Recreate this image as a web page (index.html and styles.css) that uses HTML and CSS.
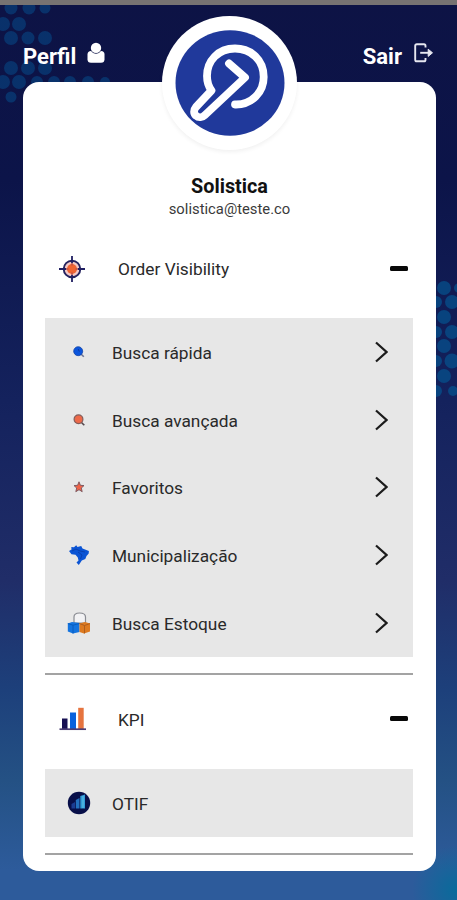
FILE: index.html
```
<!DOCTYPE html>
<html lang="pt-BR">
<head>
  <meta charset="UTF-8">
  <meta name="viewport" content="width=device-width, initial-scale=1.0">
  <title>Solistica</title>
  <link rel="stylesheet" href="styles.css">
</head>
<body>
  <svg class="dots" width="457" height="900" viewBox="0 0 457 900" aria-hidden="true">
    <g fill="#07427f" opacity=".65">
      <circle cx="11" cy="8" r="6.5"/><circle cx="29" cy="8" r="6.5"/><circle cx="45" cy="8" r="5.5"/>
      <circle cx="3" cy="24" r="7"/><circle cx="19" cy="24" r="7"/>
      <circle cx="11" cy="38" r="7"/><circle cx="28" cy="38" r="6.5"/><circle cx="45" cy="38" r="7"/>
      <circle cx="11" cy="68" r="7"/><circle cx="28" cy="68" r="7"/><circle cx="45" cy="68" r="7"/>
      <circle cx="3" cy="82" r="7"/><circle cx="19" cy="82" r="7"/><circle cx="37" cy="82" r="6"/><circle cx="54" cy="82" r="6"/>
      <circle cx="70" cy="82" r="6"/><circle cx="88" cy="82" r="6"/><circle cx="105" cy="82" r="5"/>
      <circle cx="11" cy="97" r="5.5"/>
    </g>
    <g fill="#06508c" opacity=".75">
      <circle cx="444" cy="288" r="7"/><circle cx="459" cy="288" r="5"/>
      <circle cx="436" cy="302" r="6"/><circle cx="452" cy="302" r="7"/>
      <circle cx="444" cy="317" r="7"/>
      <circle cx="436" cy="332" r="6"/><circle cx="452" cy="332" r="7"/>
      <circle cx="444" cy="346" r="7"/>
      <circle cx="436" cy="361" r="6"/><circle cx="452" cy="361" r="7.5"/>
      <circle cx="444" cy="376" r="7"/>
      <circle cx="436" cy="391" r="6"/><circle cx="453" cy="391" r="5"/>
    </g>
  </svg>

  <div class="statusbar"></div>

  <header class="topbar">
    <a class="top-link">
      <span>Perfil</span>
      <svg class="user-icon" width="18" height="21" viewBox="0 0 18 21">
        <rect x=".5" y="9" width="17" height="11.8" rx="3.5" fill="#fff"/>
        <circle cx="9" cy="6" r="5.8" fill="#0d1345"/>
        <circle cx="9" cy="5.9" r="5.2" fill="#fff"/>
      </svg>
    </a>
    <a class="top-link">
      <span>Sair</span>
      <svg class="exit-icon" width="20" height="20" viewBox="0 0 20 20" fill="none" stroke="#e6e7f0" stroke-width="1.9">
        <path d="M11.5 4.500V2.800Q11.500 1.200 10 1.200H2.800Q1.200 1.200 1.200 2.800V16.700Q1.200 18.300 2.800 18.300H10Q11.500 18.300 11.500 16.700V15"/>
        <path d="M6.2 9.8H17"/>
        <path d="M14.2 6.2L18.500 9.8L14.2 13.4Z" fill="#e6e7f0" stroke-width="1"/>
      </svg>
    </a>
  </header>

  <main class="card">
    <div class="avatar">
      <svg width="110" height="106" viewBox="0 0 110 106">
        <ellipse cx="55" cy="53" rx="54.5" ry="52.8" fill="#20399b"/>
        <g fill="none" stroke="#fff" stroke-width="7.800" stroke-linecap="round" stroke-linejoin="round">
          <path d="M60 74.500C77 75 88.700 62 88.700 47C88.700 30 76 18.500 60 18.500C43 18.500 32 31 32 46C32 52 33.500 56.500 36.500 60.500L21 77C18.500 80 18.500 83.500 21 85.700C23.500 88 27.500 87.500 30 85L70 47.500L54 33.500"/>
        </g>
      </svg>
    </div>

    <h1 class="name">Solistica</h1>
    <p class="email">solistica@teste.co</p>

    <section class="group">
      <div class="group-head">
        <span class="group-icon">
          <svg width="26" height="26" viewBox="0 0 26 26">
            <circle cx="13" cy="13" r="8.300" fill="#f4c9c6" stroke="#25235f" stroke-width="1.900"/>
            <circle cx="13" cy="13" r="5" fill="#f06432"/>
            <path d="M13 0V7M13 19V26M0 13H7M19 13H26" stroke="#201f62" stroke-width="1.800"/>
            <path d="M13 7V9.500M13 16.500V19M7 13H9.500M16.500 13H19" stroke="#bd5148" stroke-width="1.500"/>
          </svg>
        </span>
        <span class="group-title">Order Visibility</span>
        <span class="minus"></span>
      </div>
      <ul class="items">
        <li>
          <span class="item-icon">
            <svg width="12" height="12" viewBox="0 0 12 12">
              <path d="M8 8L10.800 10.800" stroke="#6e7594" stroke-width="1.600"/>
              <circle cx="5.200" cy="5.200" r="4.500" fill="#0b55dc" stroke="#1746a8" stroke-width=".8"/>
              <path d="M5.200 3L6.300 5.500" stroke="#113b9c"/>
            </svg>
          </span>
          <span class="item-text">Busca rápida</span>
          <svg class="chevron" width="14" height="22" viewBox="0 0 14 22"><path d="M2 1.500L12.500 11L2 20.500"/></svg>
        </li>
        <li>
          <span class="item-icon">
            <svg width="12" height="12" viewBox="0 0 12 12">
              <path d="M8 8L11.300 11.300" stroke="#55484d" stroke-width="1.600"/>
              <circle cx="5.500" cy="5.300" r="4.400" fill="#ed6949" stroke="#835c59" stroke-width="1.200"/>
            </svg>
          </span>
          <span class="item-text">Busca avançada</span>
          <svg class="chevron" width="14" height="22" viewBox="0 0 14 22"><path d="M2 1.500L12.500 11L2 20.500"/></svg>
        </li>
        <li>
          <span class="item-icon">
            <svg width="12" height="12" viewBox="0 0 12 12">
              <path d="M6 .8L7.400 4.300L11 4.600L8.300 7L9.200 10.700L6 8.700L2.800 10.700L3.700 7L1 4.600L4.600 4.300Z" fill="#ef6247" stroke="#74545c" stroke-width=".9"/>
            </svg>
          </span>
          <span class="item-text">Favoritos</span>
          <svg class="chevron" width="14" height="22" viewBox="0 0 14 22"><path d="M2 1.500L12.500 11L2 20.500"/></svg>
        </li>
        <li>
          <span class="item-icon">
            <svg width="22" height="22" viewBox="0 0 22 22">
              <path d="M1 7L3.500 5.500L3.300 3L6 3.200L8.200 1.200L9.500 3L13.200 2L14.500 4.500L20.900 7L20.700 9.500L18.500 12L17.300 15L13.800 16.500L10.800 21L8.500 18.500L10.500 16.500L9.800 13.500L7.500 10.800L3.500 10.300Z" fill="#0b54d4"/>
              <path d="M4 7L8 5L12 7L17 8M10 8L14 11L12.500 15" fill="none" stroke="#073ba7" stroke-width=".8"/>
            </svg>
          </span>
          <span class="item-text">Municipalização</span>
          <svg class="chevron" width="14" height="22" viewBox="0 0 14 22"><path d="M2 1.500L12.500 11L2 20.500"/></svg>
        </li>
        <li>
          <span class="item-icon">
            <svg width="24" height="24" viewBox="0 0 24 24">
              <path d="M7 12V6Q7 2 12.500 2Q18.500 2 18.500 6V12Z" fill="#f2f2f4" stroke="#898b92" stroke-width="1.200"/>
              <path d="M.8 12.500L5 11L12.500 12V21L6 22.500L.8 20.500Z" fill="#1474df"/>
              <path d="M.8 12.500L6 14.200L12.500 12.500M6 14.200V22.500" fill="none" stroke="#075abb" stroke-width=".9"/>
              <path d="M12.500 12.500L18 11L23 12.500V20.500L17 22.500L12.500 21Z" fill="#dd7a20"/>
              <path d="M12.500 12.500L17.500 14.500L23 12.500M17.500 14.500V22.500" fill="none" stroke="#a85a1c" stroke-width=".9"/>
            </svg>
          </span>
          <span class="item-text">Busca Estoque</span>
          <svg class="chevron" width="14" height="22" viewBox="0 0 14 22"><path d="M2 1.500L12.500 11L2 20.500"/></svg>
        </li>
      </ul>
    </section>

    <section class="group kpi">
      <div class="group-head">
        <span class="group-icon">
          <svg width="28" height="24" viewBox="0 0 28 24">
            <path d="M4 11.500H9.500V22H4Z" fill="#171052"/>
            <path d="M12 5.500H18V22H12Z" fill="#0861dd"/>
            <path d="M20.200 .8H25.700V22H20.200Z" fill="#e6743f"/>
            <path d="M1.500 22.200H28" stroke="#4a3c74" stroke-width="1.700"/>
          </svg>
        </span>
        <span class="group-title">KPI</span>
        <span class="minus"></span>
      </div>
      <ul class="items">
        <li>
          <span class="item-icon">
            <svg width="24" height="24" viewBox="0 0 24 24">
              <circle cx="12" cy="12" r="11.200" fill="#080f49"/>
              <path d="M4.500 13L8 11V17.500H4.500Z" fill="#1a3c93"/>
              <path d="M8.800 9L12.500 7V17.500H8.800Z" fill="#2270bf"/>
              <path d="M13.300 5L18 3.500V17.500H13.300Z" fill="#329bd8"/>
              <path d="M16 5V17" stroke="#5ec1e5" stroke-width="1"/>
            </svg>
          </span>
          <span class="item-text">OTIF</span>
        </li>
      </ul>
    </section>
  </main>
</body>
</html>
```
FILE: styles.css
```
*{
  box-sizing: border-box;
  margin: 0;
  padding: 0;
}
body{
  position: relative;
  height: 900px;
  overflow: hidden;
  font-family: Roboto, sans-serif;
  color: #2a2a2a;
  background:
    radial-gradient(circle at 457px 890px, #096b9b 0, rgba(9, 107, 155, 0) 45px),
    linear-gradient(#0d1345 0, #0c1449 180px, #14225d 400px, #202d68 580px, #1d407b 690px, #245184 780px, #2d5b9b 870px, #2d5b9b 900px);
}
.dots{
  position: absolute;
  top: 0;
  left: 0;
}
.statusbar{
  position: relative;
  height: 5px;
  background: #777372;
}
.topbar{
  position: relative;
  display: flex;
  justify-content: space-between;
  height: 77px;
  padding: 37px 23px 0;
}
.top-link{
  display: flex;
  align-items: flex-start;
  color: #fff;
  font-size: 22px;
  font-weight: 700;
  line-height: 30px;
}
.user-icon{
  margin-left: 11px;
}
.exit-icon{
  margin: 1px 0 0 12px;
}
.card{
  position: relative;
  width: 413px;
  height: 789px;
  margin-left: 23px;
  padding: 93px 22px 0;
  background: #fff;
  border-radius: 16px;
}
.avatar{
  position: absolute;
  top: -66px;
  left: 139px;
  display: flex;
  justify-content: center;
  width: 135px;
  height: 134px;
  padding-top: 14px;
  background: #fff;
  border-radius: 50%;
  box-shadow: 0 2px 4px rgba(0, 0, 0, .06);
}
.name{
  font-size: 19.800px;
  font-weight: 700;
  line-height: 24px;
  text-align: center;
  color: #111;
}
.email{
  font-size: 14.800px;
  line-height: 20px;
  text-align: center;
  color: #3a3a3a;
}
.group-head{
  display: flex;
  align-items: center;
  height: 99px;
  padding: 0 5px 0 13px;
}
.group-icon{
  display: flex;
  justify-content: center;
  width: 28px;
}
.group-title{
  flex: 1;
  margin-left: 32px;
  padding-top: 1px;
  font-size: 17.300px;
}
.minus{
  width: 18px;
  height: 5px;
  margin: 0 1px 1px 0;
  border-radius: 1.500px;
  background: #080808;
}
.items{
  width: 368px;
  list-style: none;
  background: #e7e7e7;
}
.items li{
  display: flex;
  align-items: center;
  height: 67.800px;
  padding: 0 25px 0 20px;
}
.item-icon{
  display: flex;
  justify-content: center;
  width: 27px;
}
.item-text{
  flex: 1;
  margin-left: 20px;
  padding-top: 2px;
  font-size: 17.300px;
}
.chevron{
  fill: none;
  stroke: #1c1c1c;
  stroke-width: 2.200;
}
.group::after{
  content: "";
  display: block;
  width: 368px;
  height: 2px;
  margin-top: 16px;
  background: #a3a3a3;
}
.kpi .group-head{
  height: 94px;
  padding-bottom: 5px;
}
```
